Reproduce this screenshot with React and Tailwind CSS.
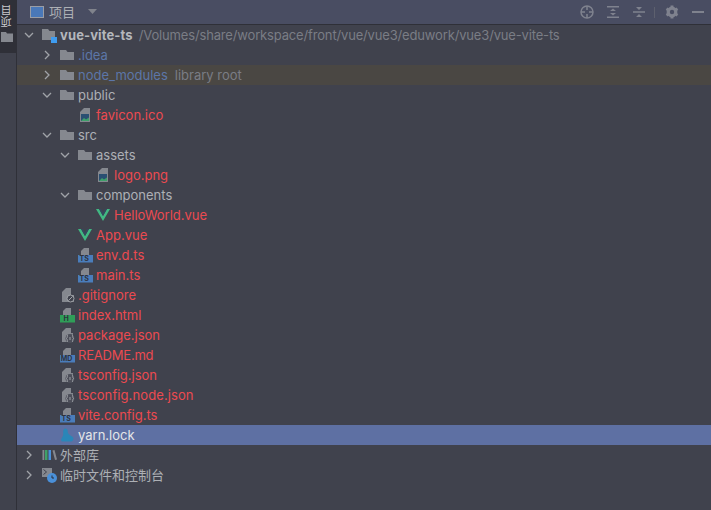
import React from 'react';

const RED = 'text-[#ec4a50]';
const GRAY = 'text-[#adb0b5]';
const BLUE = 'text-[#5c76a8]';

// 行数据：depth 决定缩进，arrow 为展开箭头
const rows = [
  { depth: 0, arrow: 'down', icon: 'module', name: 'vue-vite-ts', cls: 'font-bold tracking-[0.12px] text-[#b4b7bc]', hint: '/Volumes/share/workspace/front/vue/vue3/eduwork/vue3/vue-vite-ts', hintCls: 'ml-[6px] tracking-[-0.16px]' },
  { depth: 1, arrow: 'right', icon: 'folder', name: '.idea', cls: BLUE },
  { depth: 1, arrow: 'right', icon: 'folder', name: 'node_modules', cls: BLUE, hint: 'library root', hintCls: 'ml-[7px]', bg: 'bg-[#4a4743]' },
  { depth: 1, arrow: 'down', icon: 'folder', name: 'public', cls: GRAY },
  { depth: 2, icon: 'image', name: 'favicon.ico', cls: RED },
  { depth: 1, arrow: 'down', icon: 'folder', name: 'src', cls: GRAY },
  { depth: 2, arrow: 'down', icon: 'folder', name: 'assets', cls: GRAY },
  { depth: 3, icon: 'image', name: 'logo.png', cls: RED },
  { depth: 2, arrow: 'down', icon: 'folder', name: 'components', cls: GRAY },
  { depth: 3, icon: 'vue', name: 'HelloWorld.vue', cls: RED },
  { depth: 2, icon: 'vue', name: 'App.vue', cls: RED },
  { depth: 2, icon: 'ts', name: 'env.d.ts', cls: RED },
  { depth: 2, icon: 'ts', name: 'main.ts', cls: RED },
  { depth: 1, icon: 'ignore', name: '.gitignore', cls: RED },
  { depth: 1, icon: 'html', name: 'index.html', cls: RED },
  { depth: 1, icon: 'json', name: 'package.json', cls: RED },
  { depth: 1, icon: 'md', name: 'README.md', cls: `${RED} tracking-[-0.2px]` },
  { depth: 1, icon: 'json', name: 'tsconfig.json', cls: RED },
  { depth: 1, icon: 'json', name: 'tsconfig.node.json', cls: `${RED} tracking-[0.1px]` },
  { depth: 1, icon: 'ts', name: 'vite.config.ts', cls: RED },
  { depth: 1, icon: 'yarn', name: 'yarn.lock', cls: 'text-[#e4e5e8]', bg: 'bg-[#5e70a3]' },
  { depth: 0, arrow: 'right', icon: 'lib', name: '外部库', cls: GRAY },
  { depth: 0, arrow: 'right', icon: 'scratch', name: '临时文件和控制台', cls: GRAY },
];

const Arrow = ({ dir }) => (
  <svg width="10" height="10" viewBox="0 0 10 10" fill="none" stroke="#a0a3a8" strokeWidth="1.3">
    {dir === 'down' ? <path d="M1 3l4 4 4-4" /> : <path d="M3 1l4 4-4 4" />}
  </svg>
);

// 带折角的文件顶部
const Fold = () => <path d="M6 1h5v7H3V4z" fill="#85888f" />;

const Badge = ({ label, color, x = 1.5 }) => (
  <svg width="16" height="16" viewBox="0 0 16 16">
    <Fold />
    <rect x="0" y="8" width="15" height="7.500" fill={color} />
    <text x={x} y="14" fontSize="7" fontWeight="700" fontFamily="Inter, sans-serif" fill="#30333e">{label}</text>
  </svg>
);

const FileIcon = ({ type }) => {
  switch (type) {
    case 'folder':
      return (
        <svg width="16" height="16" viewBox="0 0 16 16">
          <path d="M0 3h6l1.500 2H14v8H0z" fill="#85888f" />
        </svg>
      );
    case 'module':
      return (
        <svg width="16" height="16" viewBox="0 0 16 16">
          <path d="M0 2h6l1.500 2H13v9H0z" fill="#85888f" />
          <rect x="9" y="10" width="6" height="6" fill="#3f9cf0" />
        </svg>
      );
    case 'image':
      return (
        <svg width="16" height="16" viewBox="0 0 16 16">
          <path d="M6 1h6v14H2V5z" fill="#85888f" />
          <rect x="3" y="7" width="8" height="7" fill="#2a4f72" />
          <path d="M3 14l3-3 2 1.500 3-2V14z" fill="#3fa06a" />
        </svg>
      );
    case 'vue':
      return (
        <svg width="16" height="16" viewBox="0 0 16 16">
          <path d="M0 2h3l4 7 4-7h3L7 14z" fill="#41b883" />
          <path d="M3 2h2l2 3.500L9 2h2L7 9z" fill="#35495e" />
        </svg>
      );
    case 'ts':
      return <Badge label="TS" color="#4a7dbb" />;
    case 'md':
      return <Badge label="MD" color="#4a7dbb" x={0.8} />;
    case 'html':
      return <Badge label="H" color="#2f9e58" x={3.5} />;
    case 'ignore':
      return (
        <svg width="16" height="16" viewBox="0 0 16 16">
          <path d="M6 1h5v7h3v7H2V5z" fill="#85888f" />
          <circle cx="10.500" cy="11.500" r="3.500" fill="#40424d" stroke="#a0a3a8" />
          <path d="M8.300 13.700l4.400-4.400" stroke="#a0a3a8" />
        </svg>
      );
    case 'json':
      return (
        <svg width="16" height="16" viewBox="0 0 16 16">
          <path d="M6 1h5v5h2v9H2V5z" fill="#85888f" />
          <circle cx="10" cy="11.500" r="4.500" fill="#4d4f5a" />
          <path d="M8 8c-1 0-.5 3-1.500 3.500C7.500 12 7 15 8 15M12 8c1 0 .5 3 1.500 3.500-1 .5-.5 3.500-1.500 3.500M10 10v3" fill="none" stroke="#a8abb0" strokeWidth="0.9" />
        </svg>
      );
    case 'yarn':
      return (
        <svg width="16" height="16" viewBox="0 0 16 16">
          <path d="M5 1.500c2 0 3 1.500 2.800 4 .4 2 3 3 5 4.500 1.200 1.500.5 4-1.300 4.500H2.500C1 14.500.7 13 1.500 11.500 2.500 9.500 3.500 8.500 3.200 6 3 4 3.500 1.500 5 1.500z" fill="#2a86b8" />
        </svg>
      );
    case 'lib':
      return (
        <svg width="16" height="16" viewBox="0 0 16 16">
          <rect x="0.500" y="3" width="1.800" height="10" fill="#85888f" />
          <rect x="3" y="3" width="2.500" height="10" fill="#3fa06a" />
          <rect x="6.500" y="3" width="2.500" height="10" fill="#4a90d9" />
          <path d="M10.500 3.500l2-.5 2.500 9.500-2 .5z" fill="#85888f" />
        </svg>
      );
    case 'scratch':
      return (
        <svg width="16" height="18" viewBox="0 0 16 18">
          <rect x="0" y="2" width="10" height="9" fill="#85888f" />
          <path d="M1.500 3.500l3 2.500-3 2.500" fill="none" stroke="#40424d" />
          <circle cx="10" cy="12" r="5" fill="#4a90d9" />
          <path d="M10 9.500V12h2" fill="none" stroke="#2b2d36" />
        </svg>
      );
    default:
      return null;
  }
};

const Row = ({ row }) => (
  <div
    className={`h-5 flex items-center whitespace-nowrap ${row.bg || ''}`}
    style={{ paddingLeft: 7 + row.depth * 18 }}
  >
    <span className="w-[18px] flex shrink-0 items-center">
      {row.arrow && <Arrow dir={row.arrow} />}
    </span>
    <span className="w-[18px] flex shrink-0 items-center">
      <FileIcon type={row.icon} />
    </span>
    <span className={`pt-px ${row.cls}`}>{row.name}</span>
    {row.hint && <span className={`pt-px text-[#7a7d85] ${row.hintCls}`}>{row.hint}</span>}
  </div>
);

const App = () => {
  return (
    <div className="w-[711px] h-[510px] overflow-hidden flex bg-[#40424d] text-[13px] font-['Inter','Noto_Sans_CJK_SC',sans-serif]">
      {/* 左侧工具栏 */}
      <div className="w-[17px] shrink-0 flex flex-col border-r border-[#2f3038]">
        <div className="h-[53px] bg-[#2f3038] flex flex-col items-start pt-[5px]">
          <span className="ml-px text-[11px] leading-[12px] text-[#c8cacd] [writing-mode:vertical-rl] rotate-180">项目</span>
          <svg className="mt-[5px] ml-px" width="12" height="10" viewBox="0 0 12 10">
            <path d="M0 0h5l1 1.500h6V10H0z" fill="#85888f" />
          </svg>
        </div>
      </div>

      <div className="flex-1 min-w-0 flex flex-col">
        {/* 顶部标题栏 */}
        <div className="h-[25px] shrink-0 bg-[#494d62] border-b border-[#2f3038] flex items-center pl-[13px] pr-[7px]">
          <svg width="14" height="14" viewBox="0 0 14 14">
            <rect x="0.500" y="1.500" width="13" height="11" fill="#4a78b8" stroke="#9a9da5" />
          </svg>
          <span className="ml-[5px] pt-px text-[#adb0b5]">项目</span>
          <svg className="ml-[13px]" width="9" height="6" viewBox="0 0 9 6">
            <path d="M0 0h9L4.500 5z" fill="#80838c" />
          </svg>
          <div className="ml-auto flex items-center text-[#7f828e]">
            <svg width="14" height="14" viewBox="0 0 14 14" fill="none" stroke="currentColor" strokeWidth="1.500">
              <circle cx="7" cy="7" r="6" />
              <path d="M7 1v4M7 9v4M1 7h4M9 7h4" />
            </svg>
            <svg className="ml-[12px]" width="14" height="14" viewBox="0 0 14 14" fill="currentColor">
              <path d="M1 1h12v1.500H1zM1 11.500h12V13H1zM7 3.500L10 6H4zM7 10.500L4 8h6z" />
            </svg>
            <svg className="ml-[12px]" width="14" height="14" viewBox="0 0 14 14" fill="currentColor">
              <path d="M1 6.300h12v1.400H1zM7 5L4 2h6zM7 9l3 3H4z" />
            </svg>
            <div className="ml-[8px] w-px h-[11px] bg-[#5d606e]" />
            <svg className="ml-[10px]" width="14" height="14" viewBox="0 0 24 24" fill="none" stroke="currentColor">
              <circle cx="12" cy="12" r="6.500" strokeWidth="5.500" />
              <path d="M12 1v4M12 19v4M2.500 6.500l3.500 2M18 15.500l3.500 2M2.500 17.500l3.500-2M18 8.500l3.500-2" strokeWidth="5" />
            </svg>
            <div className="ml-[13px] w-[12px] h-[2px] bg-current" />
          </div>
        </div>

        {/* 项目树 */}
        <div className="flex-1">
          {rows.map((row) => (
            <Row key={row.name} row={row} />
          ))}
        </div>
      </div>
    </div>
  );
};

export default App;
